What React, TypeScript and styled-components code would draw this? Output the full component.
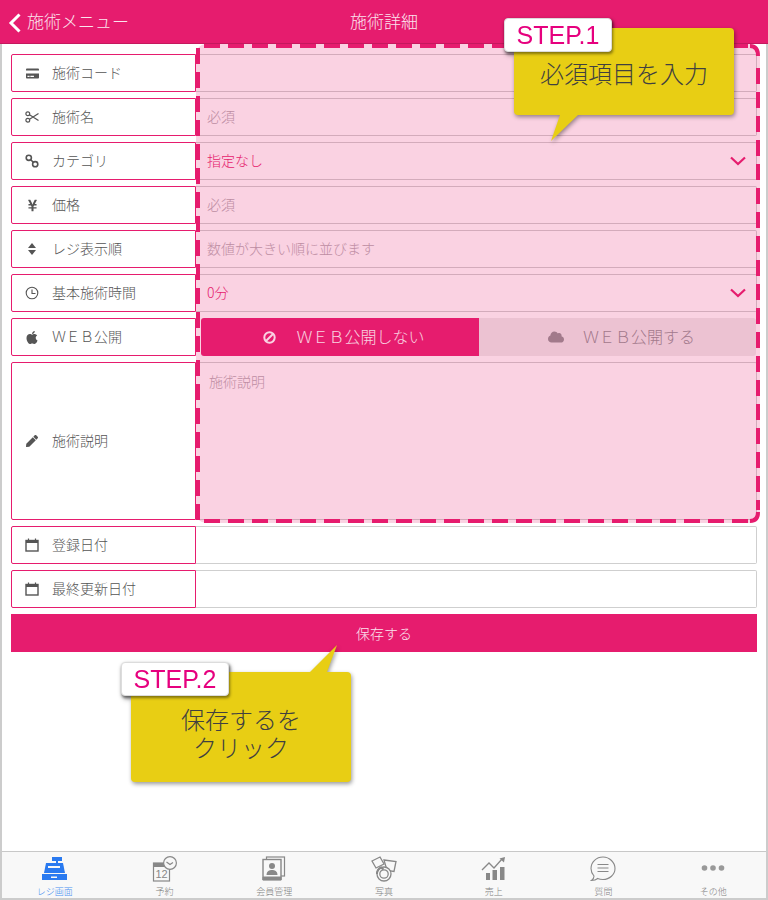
import React from 'react'
import styled, { createGlobalStyle } from 'styled-components'
import { FaApple, FaCloud, FaCreditCard, FaPen, FaYenSign } from 'react-icons/fa'

const PINK = '#e61c6e'

const GlobalStyle = createGlobalStyle`
  html, body { margin: 0; padding: 0; background: #fff; }
  * { box-sizing: border-box; }
`

const Frame = styled.div`
  position: relative;
  display: flex;
  flex-direction: column;
  width: 768px;
  height: 900px;
  overflow: hidden;
  background: #fff;
  outline: 2px solid #cccccc;
  outline-offset: -2px;
  font-family: "Noto Sans CJK JP", "Noto Sans", sans-serif;
  color: #555;
`

const Header = styled.header`
  display: flex;
  align-items: center;
  justify-content: center;
  position: relative;
  height: 44px;
  flex-shrink: 0;
  padding-bottom: 3px;
  background: ${PINK};
  border-bottom: 1px solid #c4185e;
  color: #fbe4ee;
  font-size: 17px;
  font-weight: 300;
`

const BackLink = styled.div`
  position: absolute;
  left: 8px;
  top: 8px;
  display: flex;
  align-items: center;
  gap: 6px;
  svg { margin-top: 4px; }
`

const Form = styled.main`
  display: flex;
  flex-direction: column;
  gap: 6px;
  padding: 10px 11px 0;
`

const Row = styled.div<{ $height?: number }>`
  display: flex;
  height: ${p => p.$height ?? 38}px;
`

const Label = styled.div`
  display: flex;
  align-items: center;
  gap: 13px;
  width: 185px;
  flex-shrink: 0;
  padding: 0 0 3px 13px;
  border: 1px solid ${PINK};
  border-radius: 2px 0 0 2px;
  background: #fff;
  font-size: 14px;
  font-weight: 300;
  color: #555;
  white-space: nowrap;
`

const IconBox = styled.span`
  display: flex;
  align-items: center;
  justify-content: center;
  width: 14px;
  height: 14px;
  margin-top: 3px;
  font-size: 13px;
  color: #555;
`

const Value = styled.div<{ $tone?: 'hint' | 'pink' }>`
  flex: 1;
  display: flex;
  align-items: center;
  justify-content: space-between;
  padding: 0 10px 2px 11px;
  border: 1px solid #cfcfcf;
  border-left: 0;
  border-radius: 0 2px 2px 0;
  font-size: 14px;
  font-weight: 300;
  color: ${p => (p.$tone === 'pink' ? PINK : '#b4aab0')};
  svg { margin-top: 2px; }
`

const TextArea = styled(Value)`
  align-items: flex-start;
  padding: 8px 13px;
`

const Toggle = styled.div`
  flex: 1;
  display: flex;
  padding-left: 5px;
  margin-right: 1px;
`

const ToggleOption = styled.div<{ $on?: boolean }>`
  display: flex;
  align-items: center;
  justify-content: center;
  gap: ${p => (p.$on ? 20 : 19)}px;
  width: ${p => (p.$on ? 278 : 277)}px;
  padding: 0 0 2px 8px;
  border-radius: ${p => (p.$on ? '3px 0 0 3px' : '0 3px 3px 0')};
  background: ${p => (p.$on ? PINK : '#eeecec')};
  color: ${p => (p.$on ? '#fff' : '#919193')};
  font-size: 16px;
  font-weight: 300;
  svg { margin-top: 2px; font-size: 16px; }
`

const SaveButton = styled.button`
  height: 38px;
  border: 0;
  background: ${PINK};
  color: #fbe4ee;
  font-family: inherit;
  font-size: 14px;
  font-weight: 300;
`

const Highlight = styled.svg`
  position: absolute;
  left: 196px;
  top: 44px;
  pointer-events: none;
`

const Bubble = styled.div<{ $left: number; $top: number; $height: number; $shift?: number }>`
  position: absolute;
  left: ${p => p.$left}px;
  top: ${p => p.$top}px;
  width: 220px;
  height: ${p => p.$height}px;
  padding-top: ${p => p.$shift ?? 0}px;
  display: flex;
  align-items: center;
  justify-content: center;
  text-align: center;
  border-radius: 4px;
  background: #e8ce14;
  color: #404040;
  font-size: 24px;
  font-weight: 300;
  line-height: 28px;
  filter: drop-shadow(1px 2px 2px rgba(0, 0, 0, 0.4));
`

const Tail = styled.span<{ $left: number; $top: number; $points: string }>`
  position: absolute;
  left: ${p => p.$left}px;
  top: ${p => p.$top}px;
  width: 30px;
  height: 30px;
  background: #e8ce14;
  clip-path: polygon(${p => p.$points});
`

const StepTag = styled.div`
  position: absolute;
  left: -10px;
  top: -10px;
  width: 108px;
  height: 34px;
  display: flex;
  align-items: center;
  justify-content: center;
  border: 1px solid #dcdcdc;
  border-radius: 4px;
  background: #fff;
  box-shadow: 1px 2px 3px rgba(0, 0, 0, 0.45);
  color: #e6007e;
  font-family: "Liberation Sans", Arial, sans-serif;
  font-size: 25px;
  font-weight: 400;
  line-height: 1;
`

const TabBar = styled.nav`
  display: grid;
  grid-template-columns: repeat(7, 1fr);
  height: 49px;
  margin-top: auto;
  padding-bottom: 2px;
  background: #f8f8f8;
  border-top: 1px solid #c8c8c8;
`

const Tab = styled.div<{ $active?: boolean }>`
  display: flex;
  flex-direction: column;
  align-items: center;
  padding-top: 4px;
  font-size: 9px;
  line-height: 12px;
  font-weight: 300;
  color: ${p => (p.$active ? '#4a90f0' : '#808080')};
`

const TabIcon = styled.svg`
  display: block;
  width: 26px;
  height: 26px;
  margin-bottom: 4px;
`

const ScissorsIcon = () => (
  <svg width="14" height="14" viewBox="0 0 14 14" fill="none" stroke="#555" strokeWidth="1.200">
    <circle cx="2.800" cy="3.800" r="1.900" />
    <circle cx="2.800" cy="10.200" r="1.900" />
    <path d="M4.500 4.800L13.500 10.500M4.500 9.200L13.500 3.500" />
  </svg>
)

const LinkIcon = () => (
  <svg width="14" height="14" viewBox="0 0 14 14" fill="none" stroke="#555" strokeWidth="1.6">
    <circle cx="3.8" cy="3.8" r="2.6" />
    <circle cx="10.2" cy="10.2" r="2.6" />
    <path d="M5.5 5.5l3 3" />
  </svg>
)

const SortIcon = () => (
  <svg width="10" height="14" viewBox="0 0 10 14" fill="#555">
    <path d="M5 1l4 5H1zM5 13L1 8h8z" />
  </svg>
)

const ClockIcon = () => (
  <svg width="14" height="14" viewBox="0 0 14 14" fill="none" stroke="#555" strokeWidth="1.100">
    <circle cx="7" cy="7" r="5.800" />
    <path d="M7 3.500V7.500H10.500" />
  </svg>
)

const CalendarIcon = () => (
  <svg width="14" height="14" viewBox="0 0 14 14" fill="none" stroke="#555">
    <rect x="1" y="2.5" width="12" height="10.5" strokeWidth="1.4" />
    <path d="M1 3.8h12" strokeWidth="2.4" />
    <path d="M3.5 0.5v2M10.5 0.5v2" strokeWidth="1.2" />
  </svg>
)

const BanIcon = () => (
  <svg width="13" height="13" viewBox="0 0 13 13" fill="none" stroke="#fff" strokeWidth="2">
    <circle cx="6.500" cy="6.500" r="5.200" />
    <path d="M3 10L10 3" />
  </svg>
)

const Chevron = () => (
  <svg width="16" height="10" viewBox="0 0 16 10" fill="none" stroke={PINK} strokeWidth="2.2">
    <path d="M1 1.5l7 6.5 7-6.5" />
  </svg>
)

const BackArrow = () => (
  <svg width="13" height="20" viewBox="0 0 13 20" fill="none" stroke="#fff" strokeWidth="3">
    <path d="M11.500 1.500L3 10l8.500 8.500" />
  </svg>
)

const RegisterIcon = () => (
  <TabIcon viewBox="0 0 26 26" fill="#2a7af0">
    <path d="M10 1h10v4h-4v2h-2V5h-4z" />
    <path d="M4 7h17l2 10H2z" />
    <path d="M0 18h25v6H0z" />
    <path d="M6 10h12v2H6z" fill="#f8f8f8" />
    <path d="M9 20.500h6v1.500H9z" fill="#f8f8f8" />
  </TabIcon>
)

const BookingIcon = () => (
  <TabIcon viewBox="0 0 26 26" fill="none" stroke="#888">
    <rect x="1.5" y="7" width="16" height="18" strokeWidth="1.2" />
    <path d="M1.5 9h14" strokeWidth="4" />
    <circle cx="18" cy="7" r="6.4" fill="#f8f8f8" strokeWidth="1.2" />
    <path d="M14.5 6l3.5 2.5 3-2" strokeWidth="1.2" />
    <text x="3.5" y="22" fontSize="11" fill="#888" stroke="none" fontFamily="Liberation Sans">12</text>
  </TabIcon>
)

const MemberIcon = () => (
  <TabIcon viewBox="0 0 26 26" fill="none" stroke="#888">
    <rect x="5.5" y="1" width="18" height="19" strokeWidth="1.2" />
    <rect x="2" y="3.5" width="18" height="20" fill="#f8f8f8" strokeWidth="1.4" />
    <path d="M2 21h18v3H2z" fill="#888" />
    <circle cx="11" cy="10" r="3" fill="#888" stroke="none" />
    <path d="M5.5 19c0-4 3-5 5.500-5s5.500 1 5.500 5z" fill="#888" stroke="none" />
  </TabIcon>
)

const PhotoIcon = () => (
  <TabIcon viewBox="0 0 26 26" fill="none" stroke="#888" strokeWidth="1.3">
    <path d="M1 5l8-4 4 7-8 4z" />
    <path d="M13 4l12 1.500-2 10-7-1z" />
    <circle cx="13" cy="18" r="7" fill="#f8f8f8" />
    <circle cx="13" cy="18" r="4.200" />
    <path d="M6 18a7 7 0 0 1 4-6.500l2.500 2" strokeWidth="2" />
  </TabIcon>
)

const SalesIcon = () => (
  <TabIcon viewBox="0 0 26 26" fill="#888">
    <path d="M5 17h4v7H5zM11.500 14h4.500v10h-4.500zM19 11h4.500v13H19z" />
    <path d="M1 14l7-7 5 5 8-9" fill="none" stroke="#888" strokeWidth="1.3" />
    <path d="M18.500 2.500L24 1l-1 5.500z" />
  </TabIcon>
)

const ChatIcon = () => (
  <TabIcon viewBox="0 0 26 26" fill="none" stroke="#888" strokeWidth="1.1">
    <path d="M13 1C6.400 1 1 6 1 12.500c0 3 1.200 5.500 3 7.500 0 2-1 3.500-2.500 4.500 2.800 0 4.800-.8 6.200-2 1.500.7 3.300 1 5.300 1 6.600 0 12-5 12-11S19.600 1 13 1z" />
    <path d="M7.500 8.500h11M7.500 12h11M7.500 15.500h11" strokeWidth="1.200" />
  </TabIcon>
)

const MoreIcon = () => (
  <TabIcon viewBox="0 0 26 26" fill="#999">
    <circle cx="4.500" cy="12" r="2.800" />
    <circle cx="13" cy="12" r="2.800" />
    <circle cx="21.500" cy="12" r="2.800" />
  </TabIcon>
)

const rows = [
  { label: '施術コード', icon: <FaCreditCard /> },
  { label: '施術名', icon: <ScissorsIcon />, hint: '必須' },
  { label: 'カテゴリ', icon: <LinkIcon />, select: '指定なし' },
  { label: '価格', icon: <FaYenSign />, hint: '必須' },
  { label: 'レジ表示順', icon: <SortIcon />, hint: '数値が大きい順に並びます' },
  { label: '基本施術時間', icon: <ClockIcon />, select: '0分' },
]

const tabs = [
  { label: 'レジ画面', icon: <RegisterIcon />, active: true },
  { label: '予約', icon: <BookingIcon /> },
  { label: '会員管理', icon: <MemberIcon /> },
  { label: '写真', icon: <PhotoIcon /> },
  { label: '売上', icon: <SalesIcon /> },
  { label: '質問', icon: <ChatIcon /> },
  { label: 'その他', icon: <MoreIcon /> },
]

export default function App() {
  return (
    <Frame>
      <GlobalStyle />
      <Header>
        <BackLink>
          <BackArrow />
          施術メニュー
        </BackLink>
        施術詳細
      </Header>

      <Form>
        {rows.map(row => (
          <Row key={row.label}>
            <Label>
              <IconBox>{row.icon}</IconBox>
              {row.label}
            </Label>
            {row.select ? (
              <Value $tone="pink">
                {row.select}
                <Chevron />
              </Value>
            ) : (
              <Value>{row.hint}</Value>
            )}
          </Row>
        ))}
        <Row>
          <Label>
            <IconBox><FaApple size={15} /></IconBox>
            ＷＥＢ公開
          </Label>
          <Toggle>
            <ToggleOption $on>
              <BanIcon />
              ＷＥＢ公開しない
            </ToggleOption>
            <ToggleOption>
              <FaCloud />
              ＷＥＢ公開する
            </ToggleOption>
          </Toggle>
        </Row>
        <Row $height={158}>
          <Label>
            <IconBox><FaPen size={12} /></IconBox>
            施術説明
          </Label>
          <TextArea>施術説明</TextArea>
        </Row>
        <Row>
          <Label>
            <IconBox><CalendarIcon /></IconBox>
            登録日付
          </Label>
          <Value />
        </Row>
        <Row>
          <Label>
            <IconBox><CalendarIcon /></IconBox>
            最終更新日付
          </Label>
          <Value />
        </Row>
        <SaveButton>保存する</SaveButton>
      </Form>

      <Highlight width="564" height="479" viewBox="0 0 564 479">
        <rect width="564" height="479" rx="10" fill={PINK} fillOpacity="0.2" />
        <g fill="none" stroke={PINK} strokeWidth="4">
          <path d="M8 2H552M8 477H552M2 4V476M562 24V466" strokeDasharray="16 8" />
          <path d="M554 2Q562 2 562 12M562 468Q562 477 554 477" />
        </g>
      </Highlight>

      <Bubble $left={514} $top={28} $height={87} $shift={2}>
        <Tail $left={37} $top={87} $points="9px 0, 27px 0, 0 26px" />
        必須項目を入力
        <StepTag>STEP.1</StepTag>
      </Bubble>

      <Bubble $left={131} $top={672} $height={110} $shift={12}>
        <Tail $left={176} $top={-27} $points="3px 27px, 20px 27px, 30px 0" />
        <span>保存するを<br />クリック</span>
        <StepTag>STEP.2</StepTag>
      </Bubble>

      <TabBar>
        {tabs.map(tab => (
          <Tab key={tab.label} $active={tab.active}>
            {tab.icon}
            {tab.label}
          </Tab>
        ))}
      </TabBar>
    </Frame>
  )
}
